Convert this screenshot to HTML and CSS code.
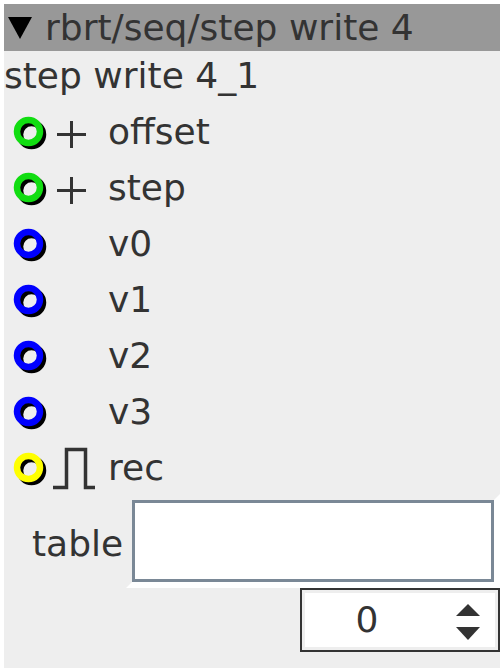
FILE: index.html
```html
<!DOCTYPE html>
<html>
<head>
<meta charset="utf-8">
<link rel="stylesheet" href="styles.css">
</head>
<body>
<div class="panel">
  <div class="header">
    <svg class="tri" width="24" height="22" viewBox="0 0 24 22"><polygon points="0,0 24,0 12,22" fill="#000"/></svg>
    <span class="htext">rbrt/seq/step write 4</span>
  </div>
  <div class="title">step write 4_1</div>
  <div class="rows">
    <div class="row">
      <svg class="port" width="34" height="34" viewBox="0 0 34 34"><circle cx="18.5" cy="18.5" r="11.5" fill="none" stroke="#000" stroke-width="6.5"/><circle cx="15.5" cy="15.5" r="11.5" fill="none" stroke="#11dd11" stroke-width="6.5"/></svg>
      <div class="icon"><svg class="plus" width="29" height="27" viewBox="0 0 29 27"><path d="M0 13.5H29M14.5 0V27" stroke="#333" stroke-width="3" fill="none"/></svg></div>
      <span class="label">offset</span>
    </div>
    <div class="row">
      <svg class="port" width="34" height="34" viewBox="0 0 34 34"><circle cx="18.5" cy="18.5" r="11.5" fill="none" stroke="#000" stroke-width="6.5"/><circle cx="15.5" cy="15.5" r="11.5" fill="none" stroke="#11dd11" stroke-width="6.5"/></svg>
      <div class="icon"><svg class="plus" width="29" height="27" viewBox="0 0 29 27"><path d="M0 13.5H29M14.5 0V27" stroke="#333" stroke-width="3" fill="none"/></svg></div>
      <span class="label">step</span>
    </div>
    <div class="row">
      <svg class="port" width="34" height="34" viewBox="0 0 34 34"><circle cx="18.5" cy="18.5" r="11.5" fill="none" stroke="#000" stroke-width="6.5"/><circle cx="15.5" cy="15.5" r="11.5" fill="none" stroke="#0000ff" stroke-width="6.5"/></svg>
      <div class="icon"></div>
      <span class="label">v0</span>
    </div>
    <div class="row">
      <svg class="port" width="34" height="34" viewBox="0 0 34 34"><circle cx="18.5" cy="18.5" r="11.5" fill="none" stroke="#000" stroke-width="6.5"/><circle cx="15.5" cy="15.5" r="11.5" fill="none" stroke="#0000ff" stroke-width="6.5"/></svg>
      <div class="icon"></div>
      <span class="label">v1</span>
    </div>
    <div class="row">
      <svg class="port" width="34" height="34" viewBox="0 0 34 34"><circle cx="18.5" cy="18.5" r="11.5" fill="none" stroke="#000" stroke-width="6.5"/><circle cx="15.5" cy="15.5" r="11.5" fill="none" stroke="#0000ff" stroke-width="6.5"/></svg>
      <div class="icon"></div>
      <span class="label">v2</span>
    </div>
    <div class="row">
      <svg class="port" width="34" height="34" viewBox="0 0 34 34"><circle cx="18.5" cy="18.5" r="11.5" fill="none" stroke="#000" stroke-width="6.5"/><circle cx="15.5" cy="15.5" r="11.5" fill="none" stroke="#0000ff" stroke-width="6.5"/></svg>
      <div class="icon"></div>
      <span class="label">v3</span>
    </div>
    <div class="row">
      <svg class="port" width="34" height="34" viewBox="0 0 34 34"><circle cx="18.5" cy="18.5" r="11.5" fill="none" stroke="#000" stroke-width="6.5"/><circle cx="15.5" cy="15.5" r="11.5" fill="none" stroke="#ffff00" stroke-width="6.5"/></svg>
      <div class="icon"><svg class="pulse" width="44" height="44" viewBox="0 0 44 44"><path d="M1 41.5H14.5V3.5H33.5V41.5H43" stroke="#333" stroke-width="3.5" fill="none"/></svg></div>
      <span class="label">rec</span>
    </div>
  </div>
  <div class="tablerow">
    <span class="tlabel">table</span>
    <div class="twrap"><div class="tbox"></div></div>
  </div>
  <div class="spinrow">
    <div class="spin">
      <span class="spinval">0</span>
      <div class="arrows"><svg width="24" height="36" viewBox="0 0 24 36"><polygon points="12,0 24,12 0,12" fill="#333"/><polygon points="0,23 24,23 12,36" fill="#333"/></svg></div>
    </div>
  </div>
</div>
</body>
</html>
```

FILE: styles.css
```css
html, body {
  margin: 0;
  padding: 0;
  background: #ffffff;
}
body {
  padding: 4px;
  font-family: "DejaVu Sans", sans-serif;
  font-size: 36px;
  color: #333333;
}
.panel {
  width: 496px;
  height: 664px;
  background: #eeeeee;
  display: flex;
  flex-direction: column;
  box-sizing: border-box;
}
.header {
  height: 47px;
  background: #989898;
  display: flex;
  align-items: center;
  line-height: 47px;
}
.tri {
  margin-left: 4px;
  margin-top: 1px;
  flex: none;
}
.htext {
  margin-left: 13px;
  white-space: nowrap;
}
.title {
  line-height: 49px;
  height: 49px;
  white-space: nowrap;
}
.rows {
  margin-top: 4px;
  display: flex;
  flex-direction: column;
}
.row {
  height: 56px;
  line-height: 56px;
  display: flex;
  align-items: center;
  padding-left: 9px;
}
.port {
  flex: none;
  margin-top: 1px;
}
.icon {
  width: 61px;
  height: 56px;
  flex: none;
  display: flex;
  align-items: center;
}
.plus {
  margin-left: 10px;
  margin-top: 4px;
}
.pulse {
  margin-left: 5px;
}
.label {
  white-space: nowrap;
}
.tablerow {
  margin-top: -2px;
  display: flex;
  align-items: center;
  padding-left: 28px;
}
.tlabel {
  margin-right: 3px;
  margin-top: 4px;
  white-space: nowrap;
}
.twrap {
  border-style: solid;
  border-width: 6px;
  border-color: #eeeeee #ffffff #ffffff #eeeeee;
}
.tbox {
  width: 356px;
  height: 76px;
  border: 3px solid #7a8896;
  background: #ffffff;
}
.spinrow {
  display: flex;
  justify-content: flex-end;
}
.spin {
  width: 200px;
  height: 64px;
  box-sizing: border-box;
  border: 2px solid #333333;
  background: #ffffff;
  box-shadow: inset 0 0 0 3px #eeeeee;
  display: flex;
  align-items: center;
  padding: 2px;
}
.spinval {
  width: 126px;
  text-align: center;
  line-height: 56px;
}
.arrows {
  flex: 1;
  padding-left: 26px;
  display: flex;
  align-items: center;
  margin-top: 3px;
}
```
